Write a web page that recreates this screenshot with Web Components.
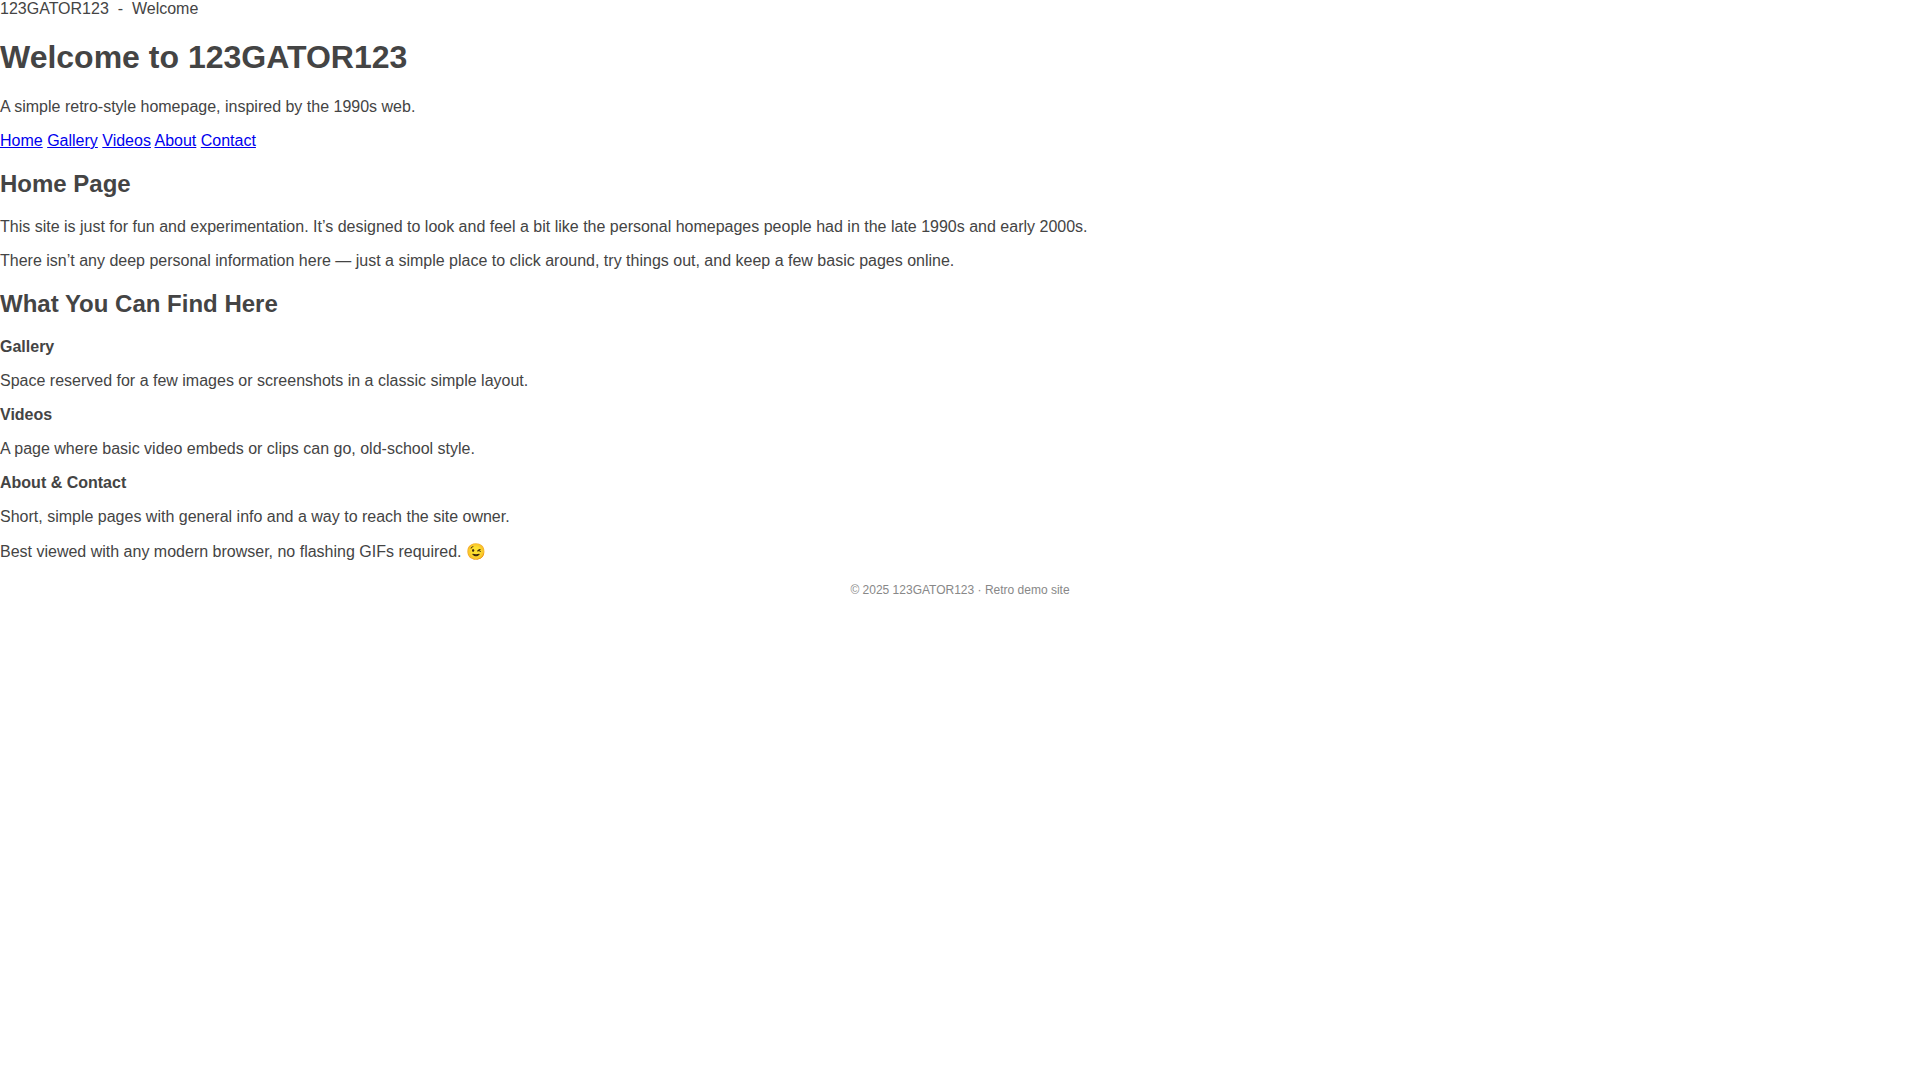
<!DOCTYPE html>
<html lang="en">
<head>
<meta charset="utf-8">
<meta name="viewport" content="width=device-width, initial-scale=1">
<title>123GATOR123 - Welcome</title>
<style>
body { margin: 0; background: #fff; color: #444; font: 16px "Liberation Sans", Arial, sans-serif; }
</style>
</head>
<body>
<retro-page></retro-page>
<script>
const define = (name, html) => {
  const template = document.createElement("template");
  template.innerHTML = html;
  customElements.define(name, class extends HTMLElement {
    constructor() {
      super();
      this.attachShadow({ mode: "open" }).append(template.content.cloneNode(true));
    }
  });
};

define("site-header", `
<style>
:host { display: block; }
h1 { font-size: 32px; margin: 21px 0 22px; }
p { margin: 16px 0; }
</style>
<header>
  <div><slot name="crumb"></slot></div>
  <h1><slot name="title"></slot></h1>
  <p><slot></slot></p>
</header>`);

define("site-nav", `
<style>
:host { display: block; margin: 16px 0; }
a { color: #0000ee; }
</style>
<nav>
  <a href="#home">Home</a>
  <a href="#gallery">Gallery</a>
  <a href="#videos">Videos</a>
  <a href="#about">About</a>
  <a href="#contact">Contact</a>
</nav>`);

define("page-section", `
<style>
:host { display: block; }
h2 { font-size: 24px; margin: 20px 0; }
::slotted(p) { margin: 16px 0; }
</style>
<section>
  <h2><slot name="heading"></slot></h2>
  <slot></slot>
</section>`);

define("feature-item", `
<style>
:host { display: block; }
h3, p { font-size: 16px; margin: 16px 0; }
</style>
<h3><slot name="name"></slot></h3>
<p><slot></slot></p>`);

define("site-footer", `
<style>
:host { display: block; margin: 22px 0; text-align: center; font-size: 12px; color: #888; }
</style>
<footer><slot></slot></footer>`);

define("retro-page", `
<style>:host { display: block; }</style>
<site-header>
  <span slot="crumb">123GATOR123 &nbsp;-&nbsp; Welcome</span>
  <span slot="title">Welcome to 123GATOR123</span>A simple retro-style homepage, inspired by the 1990s web.</site-header>
<site-nav></site-nav>
<main>
  <page-section>
    <span slot="heading">Home Page</span>
    <p>This site is just for fun and experimentation. It’s designed to look and feel a bit like the personal homepages people had in the late 1990s and early 2000s.</p>
    <p>There isn’t any deep personal information here — just a simple place to click around, try things out, and keep a few basic pages online.</p>
  </page-section>
  <page-section>
    <span slot="heading">What You Can Find Here</span>
    <feature-item><span slot="name">Gallery</span>Space reserved for a few images or screenshots in a classic simple layout.</feature-item>
    <feature-item><span slot="name">Videos</span>A page where basic video embeds or clips can go, old-school style.</feature-item>
    <feature-item><span slot="name">About &amp; Contact</span>Short, simple pages with general info and a way to reach the site owner.</feature-item>
    <p>Best viewed with any modern browser, no flashing GIFs required. 😉</p>
  </page-section>
</main>
<site-footer>© 2025 123GATOR123 · Retro demo site</site-footer>`);
</script>
</body>
</html>
